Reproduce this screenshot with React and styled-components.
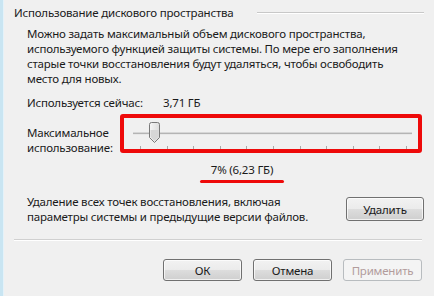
import styled, { createGlobalStyle } from 'styled-components'

const GlobalStyle = createGlobalStyle`
  html, body {
    margin: 0;
    padding: 0;
    background: #f0f0f0;
  }
  body {
    font-family: 'Noto Sans', 'Open Sans', sans-serif;
    font-size: 11.5px;
    letter-spacing: -0.2px;
    color: #1a1a1a;
  }
`

const SWindow = styled.div`
  width: 434px;
  height: 296px;
  display: flex;
  background: #f0f0f0;
  overflow: hidden;
`

const SStrip = styled.div`
  width: 3px;
  background: #c9e5f2;
  border-right: 1px solid #e4f2f9;
`

const SMain = styled.div`
  flex: 1;
  display: flex;
  flex-direction: column;
  padding: 5px 10px 0 10px;
  white-space: nowrap;
`

const SGroupHeader = styled.div`
  display: flex;
  align-items: center;
  line-height: 15px;
`

const SGroupLine = styled.div`
  flex: 1;
  margin-left: 23px;
  border-top: 1px solid #c8c8c8;
  border-bottom: 1px solid #ffffff;
`

const SBody = styled.div`
  padding-left: 13px;
  display: flex;
  flex-direction: column;
  line-height: 15px;
`

const SParagraph = styled.div`
  margin-top: 6px;
`

const SUsedRow = styled.div`
  display: flex;
  margin-top: 9px;
`

const SLabel = styled.div`
  width: ${(p) => p.$width}px;
  flex-shrink: 0;
  margin-top: ${(p) => p.$top || 0}px;
`

const SSliderRow = styled.div`
  display: flex;
  align-items: flex-start;
  margin-top: 4px;
`

const SHighlight = styled.div`
  flex: 1;
  margin-right: 2px;
  border: 4px solid #ee0a0a;
  border-radius: 3px;
`

const SSlider = styled.div`
  position: relative;
  height: 31px;
`

const STrack = styled.div`
  position: absolute;
  top: 14px;
  left: 9px;
  right: 6px;
  height: 1px;
  background: #b4b4b4;
  border-bottom: 1px solid #e8e8e8;
  border-top: 1px solid #d6d6d6;
`

const STicks = styled.div`
  position: absolute;
  top: 28px;
  left: 16px;
  right: 11px;
  height: 3px;
  display: flex;
  justify-content: space-between;
`

const STick = styled.div`
  width: 1px;
  height: 3px;
  background: #a8a8a8;
`

const SThumb = styled.svg`
  position: absolute;
  top: 4px;
  left: 25px;
`

const SPercent = styled.div`
  margin-top: 7px;
  margin-left: 173px;
  width: 84px;
  display: flex;
  flex-direction: column;
  align-items: center;
`

const SUnderline = styled.div`
  margin-top: 3px;
  width: 84px;
  height: 3px;
  border-radius: 2px;
  background: #ee0a0a;
`

const SDeleteRow = styled.div`
  display: flex;
  align-items: center;
  justify-content: space-between;
  margin-top: 11px;
`

const SButton = styled.button`
  width: ${(p) => p.$width || 79}px;
  height: ${(p) => p.$height || 22}px;
  padding: 0;
  font-family: inherit;
  font-size: 11.5px;
  letter-spacing: -0.2px;
  color: ${(p) => (p.disabled ? '#b29c9c' : '#1a1a1a')};
  border: 1px solid ${(p) => (p.disabled ? '#b8bcbf' : '#707070')};
  border-radius: 3px;
  background: ${(p) =>
    p.disabled
      ? '#f4f4f4'
      : 'linear-gradient(to bottom, #f2f2f2 0%, #ebebeb 50%, #dddddd 51%, #cfcfcf 100%)'};
  box-shadow: inset 0 0 0 1px ${(p) => (p.disabled ? '#f4f4f4' : 'rgba(255,255,255,0.7)')};
`

const SSeparator = styled.div`
  margin-top: 15px;
  margin-right: 2px;
  border-top: 1px solid #d0d0d0;
  border-bottom: 1px solid #ffffff;
`

const SFooter = styled.div`
  display: flex;
  justify-content: flex-end;
  gap: 11px;
  margin-top: 18px;
  margin-right: 2px;
`

const Thumb = () => (
  <SThumb width="12" height="22" viewBox="0 0 12 22">
    <defs>
      <linearGradient id="thumbFill" x1="0" y1="0" x2="1" y2="0">
        <stop offset="0" stopColor="#f6f6f6" />
        <stop offset="1" stopColor="#dcdcdc" />
      </linearGradient>
    </defs>
    <path
      d="M0.5 2.5 Q0.5 0.5 2.5 0.5 L8.5 0.5 Q10.5 0.5 10.5 2.5 L10.5 15.5 L5.5 20.5 L0.5 15.5 Z"
      fill="url(#thumbFill)"
      stroke="#787878"
    />
    <path d="M1.5 8 L9.5 8 L9.5 15 L5.5 19 L1.5 15 Z" fill="#d6d6d6" />
  </SThumb>
)

const App = () => {
  const ticks = Array.from({ length: 11 })

  return (
    <>
      <GlobalStyle />
      <SWindow>
        <SStrip />
        <SMain>
          <SGroupHeader>
            Использование дискового пространства
            <SGroupLine />
          </SGroupHeader>
          <SBody>
            <SParagraph>
              Можно задать максимальный объем дискового пространства,
              <br />
              используемого функцией защиты системы. По мере его заполнения
              <br />
              старые точки восстановления будут удаляться, чтобы освободить
              <br />
              место для новых.
            </SParagraph>
            <SUsedRow>
              <SLabel $width={136}>Используется сейчас:</SLabel>
              <div>3,71 ГБ</div>
            </SUsedRow>
            <SSliderRow>
              <SLabel $width={93} $top={11}>
                Максимальное
                <br />
                использование:
              </SLabel>
              <SHighlight>
                <SSlider>
                  <STrack />
                  <STicks>
                    {ticks.map((_, i) => (
                      <STick key={i} />
                    ))}
                  </STicks>
                  <Thumb />
                </SSlider>
              </SHighlight>
            </SSliderRow>
            <SPercent>
              <div>7% (6,23 ГБ)</div>
              <SUnderline />
            </SPercent>
            <SDeleteRow>
              <div>
                Удаление всех точек восстановления, включая
                <br />
                параметры системы и предыдущие версии файлов.
              </div>
              <SButton $width={78} $height={24}>
                Удалить
              </SButton>
            </SDeleteRow>
          </SBody>
          <SSeparator />
          <SFooter>
            <SButton>ОК</SButton>
            <SButton>Отмена</SButton>
            <SButton disabled>Применить</SButton>
          </SFooter>
        </SMain>
      </SWindow>
    </>
  )
}

export default App
